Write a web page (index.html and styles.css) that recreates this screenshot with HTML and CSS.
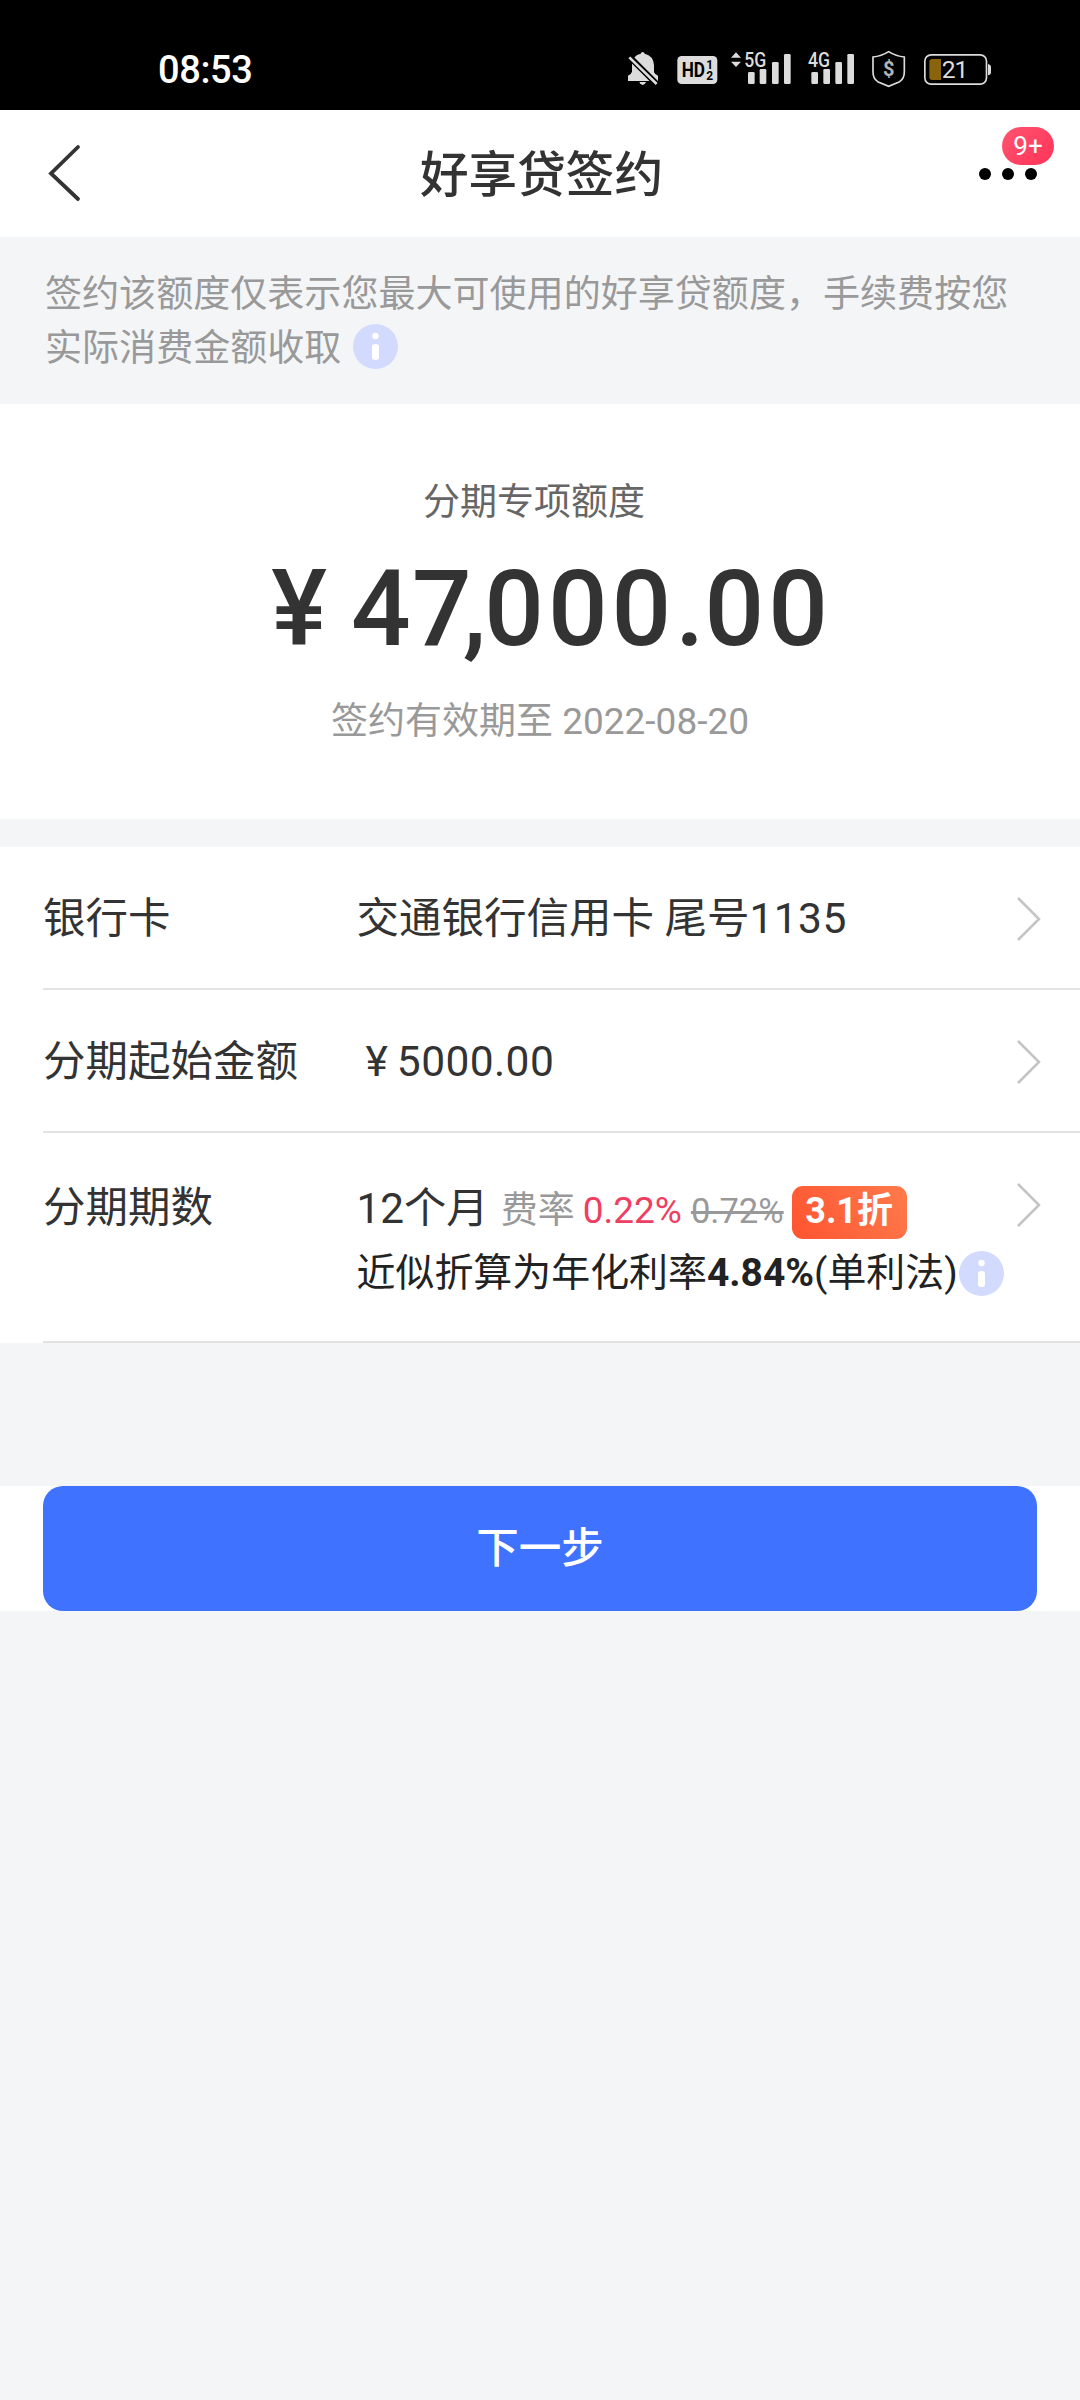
FILE: index.html
```html
<!DOCTYPE html>
<html lang="zh-CN">
<head>
<meta charset="utf-8">
<title>好享贷签约</title>
<link rel="stylesheet" href="styles.css">
</head>
<body>
<header class="status">
  <span class="clock">08:53</span>
  <div class="status-icons">
    <svg class="i-bell" viewBox="84 60 92 112"><path fill="#dcdcdc" d="M122 71q1-5 6-5t6 5q26 6 28 34v22q4 8 12 10v16H84v-16q10-4 12-12v-22q2-27 26-32zM118 156h20q-3 9-10 9t-10-9z"/><path d="M84 76l88 88" stroke="#000" stroke-width="18"/><path d="M88 82l82 80" stroke="#dcdcdc" stroke-width="8"/></svg>
    <svg class="i-hd" viewBox="230 60 122 112"><rect x="231" y="78" width="120" height="84" rx="13" fill="#dcdcdc"/><text x="244" y="142" font-size="61" font-weight="700" textLength="70" lengthAdjust="spacingAndGlyphs">HD</text><text x="318" y="116" font-size="36" font-weight="700">1</text><text x="318" y="151" font-size="36" font-weight="700">2</text></svg>
    <svg class="i-5g" viewBox="394 60 180 112"><g fill="#dcdcdc"><path d="M394 83l15-16 15 16zM394 95l15 16 15-16z"/><text x="434" y="111" font-size="60" font-weight="500" textLength="66" lengthAdjust="spacingAndGlyphs">5G</text><rect x="445" y="126" width="20" height="36" rx="4"/><rect x="480" y="117" width="20" height="45" rx="4"/><rect x="517" y="96" width="20" height="66" rx="4"/><rect x="553" y="72" width="20" height="90" rx="4"/></g></svg>
    <svg class="i-4g" viewBox="624 60 138 112"><g fill="#dcdcdc"><text x="624" y="111" font-size="60" font-weight="500" textLength="66" lengthAdjust="spacingAndGlyphs">4G</text><rect x="634" y="126" width="20" height="36" rx="4"/><rect x="670" y="117" width="20" height="45" rx="4"/><rect x="706" y="96" width="20" height="66" rx="4"/><rect x="742" y="72" width="20" height="90" rx="4"/></g></svg>
    <svg class="i-shield" viewBox="816 60 100 112"><path d="M866 65q22 14 47 16v45q0 20-14 29l-33 14-33-14q-14-9-14-29V81q25-2 47-16z" fill="none" stroke="#dcdcdc" stroke-width="5"/><text x="866" y="137" text-anchor="middle" font-size="60" font-weight="700" fill="#b4b4b4">$</text></svg>
    <svg class="i-batt" viewBox="972 60 202 112"><rect x="974.5" y="74.500" width="185" height="88" rx="19" fill="none" stroke="#dcdcdc" stroke-width="5"/><path d="M1023 87h-26q-9 0-9 9v45q0 9 9 9h26z" fill="#8a640c"/><path d="M1164 102q9 2 9 8v18q0 6-9 8z" fill="#dcdcdc"/><text x="1025" y="145" font-size="74" fill="#dcdcdc" textLength="80" lengthAdjust="spacing">21</text></svg>
  </div>
</header>
<nav class="nav">
  <svg class="back" viewBox="0 0 36 60"><path d="M32 4L5 30.500 32 56" fill="none" stroke="#333" stroke-width="3.800" stroke-linecap="round"/></svg>
  <h1 class="title">好享贷签约</h1>
  <div class="more"><i></i><i></i><i></i><span class="count">9+</span></div>
</nav>
<p class="notice">签约该额度仅表示您最大可使用的好享贷额度，手续费按您实际消费金额收取<svg class="info" viewBox="0 0 45 45"><circle cx="22.500" cy="22.500" r="22.500"/><g fill="#fff"><circle cx="22.500" cy="12" r="3.200"/><rect x="19" y="20" width="7" height="16" rx="3"/></g></svg></p>
<section class="quota">
  <div class="quota-label">分期专项额度</div>
  <div class="amount"><span>¥</span><span><span class="k4">4</span><span class="k7">7</span><span class="kc">,</span>000<span class="kp">.</span>00</span></div>
  <div class="valid">签约有效期至 2022-08-20</div>
</section>
<section class="list">
  <div class="row">
    <span class="label">银行卡</span><span class="value">交通银行信用卡 尾号<span class="num">1135</span></span>
    <svg class="chev" viewBox="0 0 24 44"><path d="M1 1l21 21L1 43"/></svg>
  </div>
  <div class="row">
    <span class="label">分期起始金额</span><span class="value money"><span>¥</span><span class="num">5000.00</span></span>
    <svg class="chev" viewBox="0 0 24 44"><path d="M1 1l21 21L1 43"/></svg>
  </div>
  <div class="row row-term">
    <span class="label">分期期数</span>
    <div class="term">
      <div class="term-line"><span class="months">12个月</span><span class="fee">费率</span><span class="rate">0.22%</span><s class="old">0.72%</s><span class="off">3.1折</span></div>
      <div class="apr">近似折算为年化利率<b>4.84%</b>(单利法)<svg class="info" viewBox="0 0 45 45"><circle cx="22.500" cy="22.500" r="22.500"/><g fill="#fff"><circle cx="22.500" cy="12" r="3.200"/><rect x="19" y="20" width="7" height="16" rx="3"/></g></svg></div>
    </div>
    <svg class="chev" viewBox="0 0 24 44"><path d="M1 1l21 21L1 43"/></svg>
  </div>
</section>
<div class="action"><button class="next">下一步</button></div>
</body>
</html>
```
FILE: styles.css
```css
* { box-sizing: border-box; }
body {
  margin: 0;
  width: 1080px;
  height: 2400px;
  background: #f4f5f7;
  color: #333;
  font-family: Roboto, "Noto Sans CJK SC", sans-serif;
}
svg { display: block; flex: none; overflow: visible; }
.status {
  height: 110px;
  background: #000;
  display: flex;
  justify-content: space-between;
  padding: 50px 88.700px 0 158px;
}
.clock { color: #fff; font-size: 38px; line-height: 40px; font-weight: 500; letter-spacing: -.4px; }
.status-icons { display: flex; height: 37.330px; }
.status-icons svg { height: 37.330px; font-family: Roboto, sans-serif; }
.i-bell { width: 30.670px; margin-right: 18px; }
.i-hd { width: 40.670px; margin-right: 14px; }
.i-5g { width: 60px; margin-right: 16.670px; }
.i-4g { width: 46px; margin-right: 18px; }
.i-shield { width: 33.330px; margin-right: 18.670px; }
.i-batt { width: 67.330px; }

.nav {
  height: 127px;
  background: #fff;
  display: grid;
  grid-template-columns: 1fr auto 1fr;
  align-items: center;
  padding: 0 43px 0 46px;
}
.back { width: 36px; height: 60px; margin-bottom: 2px; }
.title { margin: 0; padding-top: 5px; font-size: 48.600px; line-height: 60px; font-weight: 500; }
.more { position: relative; justify-self: end; display: flex; gap: 11px; width: 58px; }
.more i { width: 12px; height: 12px; border-radius: 50%; background: #000; }
.count {
  position: absolute;
  left: 23px;
  top: -41px;
  width: 52px;
  height: 38px;
  border-radius: 19px;
  background: linear-gradient(135deg, #ff5470, #ff3358);
  color: #fff;
  font-size: 26px;
  line-height: 38px;
  text-align: center;
}
.notice {
  margin: 0;
  height: 167px;
  padding: 31px 45px 0;
  color: #999;
  font-size: 37.050px;
  line-height: 54px;
}
.info { width: 45px; height: 45px; fill: #d2dbfd; }
.notice .info { display: inline-block; vertical-align: -8px; margin-left: 12px; }

.quota { height: 415px; background: #fff; text-align: center; padding-top: 72px; }
.quota-label { font-size: 37px; line-height: 54px; color: #666; padding-right: 12px; }
.amount {
  display: flex;
  justify-content: center;
  gap: 20px;
  margin-top: 18px;
  padding-left: 23px;
  font-size: 105px;
  line-height: 124px;
  font-weight: 500;
  letter-spacing: 4px;
}
.k4 { letter-spacing: 1.500px; }
.k7 { letter-spacing: -9px; }
.kc { letter-spacing: -2px; }
.kp { letter-spacing: 0; }
.valid { margin-top: 23px; font-size: 37px; line-height: 54px; color: #999; }

.list { margin-top: 28px; background: #fff; }
.row {
  height: 143px;
  display: flex;
  align-items: flex-start;
  padding: 42px 39px 0 43px;
  font-size: 42.500px;
  line-height: 60px;
  background: linear-gradient(#e3e3e3, #e3e3e3) 43px 100% / 100% 2px no-repeat;
}
.label { width: 313.500px; flex: none; }
.value { flex: 1; }
.num { letter-spacing: .4px; }
.money { display: flex; gap: 9px; padding-left: 9px; }
.chev { width: 24px; height: 44px; margin: 8px 0 0 auto; fill: none; stroke: #c4c4c4; stroke-width: 2.500; }
.row-term { height: 210px; padding-top: 45px; }
.term-line { display: flex; align-items: baseline; height: 73px; line-height: 62px; white-space: nowrap; }
.months { font-size: 42.300px; }
.fee { font-size: 37px; color: #999; margin-left: 12px; }
.rate { font-size: 37px; color: #ee3f62; margin-left: 8px; }
.old { font-size: 34.600px; color: #999; margin-left: 9px; }
.off {
  height: 53px;
  width: 115px;
  margin-left: 8px;
  border-radius: 11px;
  background: linear-gradient(60deg, #ff5430, #ff7a4c);
  color: #fff;
  font-size: 36px;
  line-height: 51px;
  font-weight: 700;
  text-align: center;
}
.apr { display: flex; font-size: 38.950px; line-height: 45px; color: #222; white-space: nowrap; }
.apr .info { margin-left: 1px; }
.row-term .chev { margin-top: 5px; }
.action { margin-top: 143px; padding: 0 43px; background: #fff; }
.next {
  display: block;
  width: 100%;
  height: 125px;
  padding: 0;
  border: 0;
  border-radius: 20px;
  background: #3f73ff;
  color: #fff;
  font: 500 42.500px/60px Roboto, "Noto Sans CJK SC", sans-serif;
}
```
